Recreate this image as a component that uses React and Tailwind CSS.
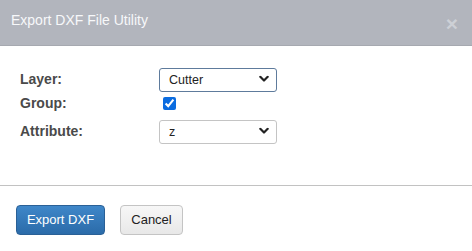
import React from "react";

function Chevron() {
    return (
        <svg className="pointer-events-none absolute right-[8px] top-1/2 -translate-y-1/2" width="10" height="7" viewBox="0 0 10 7">
            <path d="M1.3 1.3 L5 5 L8.7 1.3" fill="none" stroke="#222" strokeWidth="2.2" strokeLinecap="round" strokeLinejoin="round" />
        </svg>
    );
}

function SelectBox({ value, options, focused }) {
    return (
        <div className="relative w-[118px] h-[24px]">
            <select
                defaultValue={value}
                className={`appearance-none w-full h-full bg-white rounded-[3px] pl-[9px] pr-6 text-[12.5px] text-[#222] outline-none border ${focused ? "border-[#5e7b9c]" : "border-[#c4c4c4]"}`}
            >
                {options.map((o) => (
                    <option key={o}>{o}</option>
                ))}
            </select>
            <Chevron />
        </div>
    );
}

export default function App() {
    return (
        <div className="w-[472px] h-[251px] bg-white font-['Liberation_Sans',Arial,sans-serif] overflow-hidden">
            {/* header */}
            <div className="h-[46px] bg-[#b2b5bd] border-b border-[#a6a9b0] flex items-center justify-between pl-[11px] pr-[14px]">
                <span className="text-[14px] text-[#f7f8fa] mt-[-5px]">Export DXF File Utility</span>
                <span className="text-[21px] font-bold text-[#cdd0d6] leading-none mt-[2px]">×</span>
            </div>

            {/* body */}
            <div className="pt-[21px] pl-[20px] h-[140px] border-b border-[#c2c2c2]">
                <div className="flex items-center h-[24px]">
                    <label className="w-[139px] text-[14px] font-bold text-[#4a4a4a]">Layer:</label>
                    <SelectBox value="Cutter" options={["Cutter", "Marker", "Crease"]} focused />
                </div>
                <div className="flex items-center h-[20px] mt-[2px]">
                    <label className="w-[143px] text-[14px] font-bold text-[#4a4a4a]">Group:</label>
                    <input type="checkbox" defaultChecked className="w-[13px] h-[13px] m-0 accent-[#0b6ce0]" />
                </div>
                <div className="flex items-center h-[24px] mt-[6px]">
                    <label className="w-[139px] text-[14px] font-bold text-[#4a4a4a]">Attribute:</label>
                    <SelectBox value="z" options={["z", "layer", "color"]} />
                </div>
            </div>

            {/* footer */}
            <div className="flex items-start gap-[15px] pl-[16px] pt-[19px]">
                <button className="h-[30px] w-[89px] rounded-[4px] border border-[#2a6096] bg-gradient-to-b from-[#3f87c9] to-[#2b6ba9] text-white text-[13px]">
                    Export DXF
                </button>
                <button className="h-[30px] w-[63px] rounded-[4px] border border-[#c4c4c4] bg-gradient-to-b from-[#f7f7f7] to-[#e8e8e8] text-[#222] text-[13px]">
                    Cancel
                </button>
            </div>
        </div>
    );
}
